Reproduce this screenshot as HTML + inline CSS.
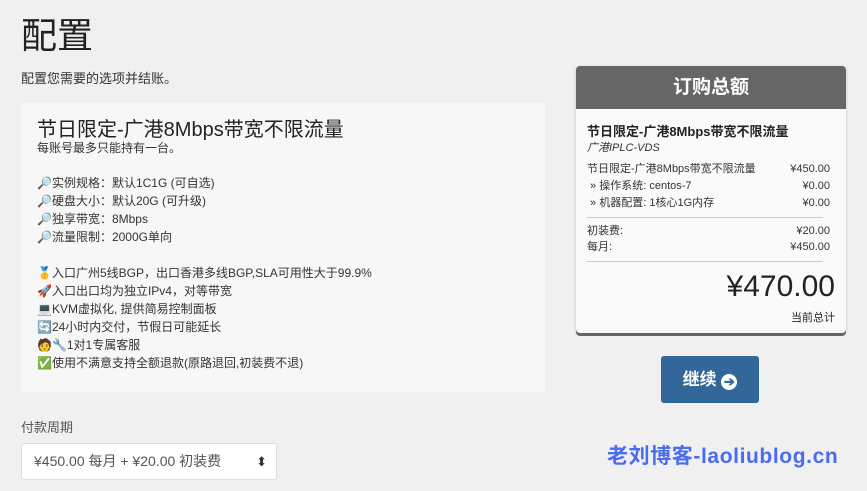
<!DOCTYPE html><html><head><meta charset="utf-8"><style>
body{margin:0;width:867px;height:491px;background:#f0f0f0;font-family:"Liberation Sans","Noto Sans CJK SC",sans-serif;color:#333;position:relative;overflow:hidden}
.a{position:absolute;white-space:nowrap}
h1{position:absolute;left:21px;top:12px;margin:0;font-size:36px;font-weight:normal;color:#222;line-height:48px}
.p{position:absolute;left:21px;top:103px;width:524px;height:289px;background:#f7f7f7}
.f{font-size:12px;line-height:18px;color:#333}
.card{position:absolute;left:576px;top:66px;width:270px;height:267px;background:#fafafa;border-radius:4px;box-shadow:0 3px 0 #666 ,0 1px 3px rgba(0,0,0,.2);overflow:hidden}
.hd{height:43px;background:#666;color:#fff;font-size:19px;text-align:center;line-height:43px;font-weight:bold}
.r{position:absolute;left:11px;right:16px;font-size:11px;line-height:17px}
.r span{float:right}
hr{position:absolute;left:11px;width:236px;margin:0;border:0;border-top:1px solid #ccc}
</style></head><body>
<h1>配置</h1>
<div class="a" style="left:21px;top:68px;font-size:13px">配置您需要的选项并结账。</div>
<div class="p">
<div class="a" style="left:16px;top:10px;font-size:20px;color:#222">节日限定-广港8Mbps带宽不限流量</div>
<div class="a" style="left:16px;top:36px;font-size:12px">每账号最多只能持有一台。</div>
<div class="a f" style="left:16px;top:71px">🔎实例规格：默认1C1G (可自选)<br>🔎硬盘大小：默认20G (可升级)<br>🔎独享带宽：8Mbps<br>🔎流量限制：2000G单向<br><br>🥇入口广州5线BGP，出口香港多线BGP,SLA可用性大于99.9%<br>🚀入口出口均为独立IPv4，对等带宽<br>💻KVM虚拟化, 提供简易控制面板<br>🔄24小时内交付，节假日可能延长<br>🧑🔧1对1专属客服<br>✅使用不满意支持全额退款(原路退回,初装费不退)</div>
</div>
<div class="a" style="left:21px;top:417px;font-size:13px;color:#555">付款周期</div>
<div class="a" style="left:21px;top:443px;width:256px;height:37px;background:#fff;border:1px solid #ddd;border-radius:3px;box-sizing:border-box;font-size:14px;line-height:35px;padding-left:12px;color:#555">¥450.00 每月 + ¥20.00 初装费 <span style="position:absolute;right:9px;font-size:13px;color:#333">⬍</span></div>
<div class="card"><div class="hd">订购总额</div>
<div class="a" style="left:11px;top:55px;font-size:13px;font-weight:bold;color:#222">节日限定-广港8Mbps带宽不限流量</div>
<div class="a" style="left:11px;top:73px;font-size:11px;font-style:italic">广港IPLC-VDS</div>
<div class="r" style="top:95px">节日限定-广港8Mbps带宽不限流量<span>¥450.00</span></div>
<div class="r" style="top:112px">&nbsp;» 操作系统: centos-7<span>¥0.00</span></div>
<div class="r" style="top:129px">&nbsp;» 机器配置: 1核心1G内存<span>¥0.00</span></div>
<hr style="top:151px">
<div class="r" style="top:157px">初装费:<span>¥20.00</span></div>
<div class="r" style="top:173px">每月:<span>¥450.00</span></div>
<hr style="top:195px">
<div class="a" style="right:11px;top:204px;font-size:30px;color:#222">¥470.00</div>
<div class="a" style="right:11px;top:243px;font-size:11px;color:#222">当前总计</div>
</div>
<div class="a" style="left:661px;top:356px;width:98px;height:47px;background:#336699;border-radius:3px;color:#fff;font-size:17px;font-weight:bold;line-height:47px;text-align:center">继续 <span style="display:inline-block;width:16px;height:16px;border-radius:50%;background:#fff;color:#336699;font-size:13px;line-height:16px;vertical-align:-1px">➔</span></div>
<div class="a" style="left:607px;top:440px;font-size:21px;font-weight:bold;color:#4a6cf0;letter-spacing:0.6px">老刘博客-laoliublog.cn</div>
</body></html>
